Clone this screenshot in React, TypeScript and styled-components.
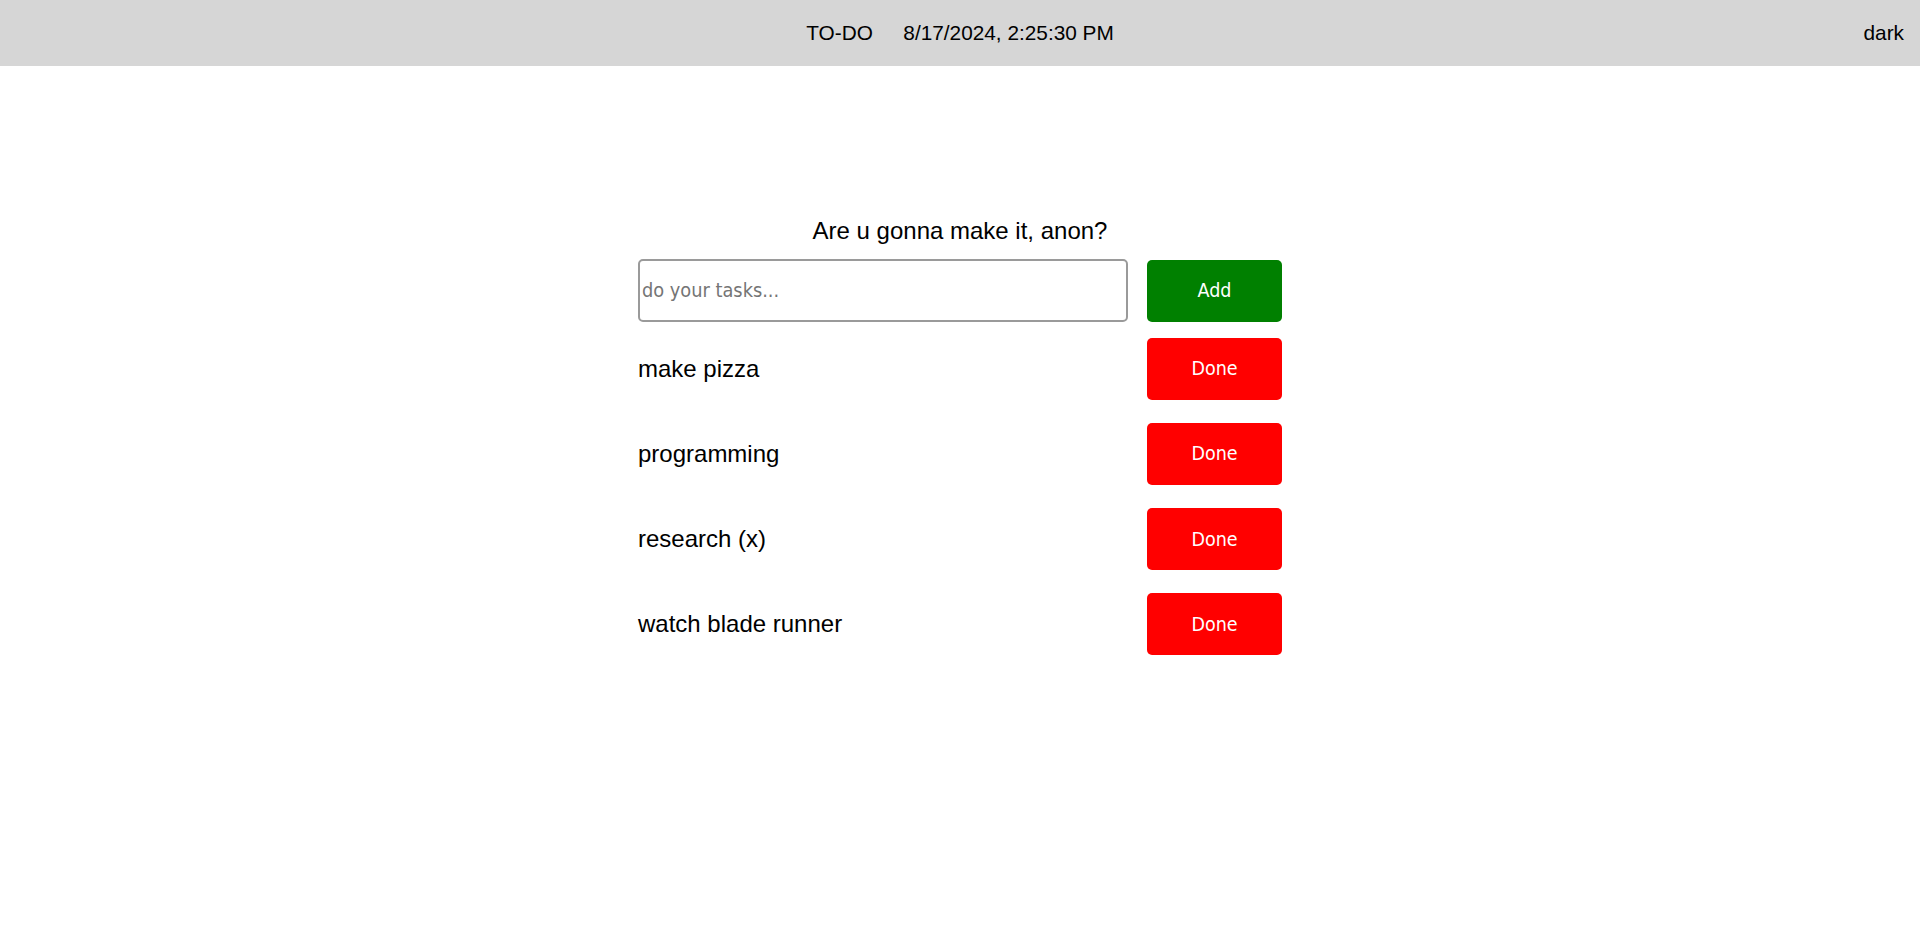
import React, { useState } from "react";
import styled, { createGlobalStyle } from "styled-components";

const GlobalStyle = createGlobalStyle`
  html, body {
    margin: 0;
    padding: 0;
    background: #ffffff;
    font-family: "Liberation Sans", Arial, sans-serif;
    color: #000000;
  }
  * { box-sizing: border-box; }
`;

const Header = styled.header`
  height: 66px;
  background: #d6d6d6;
  display: grid;
  grid-template-columns: 1fr auto 1fr;
  align-items: center;
  padding: 0 16px;
  font-size: 20.8px;
`;

const Brand = styled.div`
  grid-column: 2;
  display: flex;
  align-items: center;
  gap: 30.5px;
`;

const ThemeToggle = styled.button`
  grid-column: 3;
  justify-self: end;
  background: transparent;
  border: none;
  padding: 0;
  font-family: "Liberation Sans", Arial, sans-serif;
  font-size: 20.8px;
  color: #000000;
  cursor: pointer;
`;

const Main = styled.main`
  width: 644px;
  margin: 0 auto;
  padding-top: 150.5px;
  display: flex;
  flex-direction: column;
`;

const Title = styled.h1`
  margin: 0 0 15.5px;
  font-size: 24px;
  font-weight: 400;
  text-align: center;
  line-height: 27px;
`;

const InputRow = styled.form`
  display: flex;
  align-items: center;
  justify-content: space-between;
  margin-bottom: 15.5px;
`;

const TaskInput = styled.input`
  width: 490px;
  height: 63px;
  border: 2px solid #9a9a9a;
  border-radius: 5px;
  padding: 1px 2px;
  font-family: "DejaVu Sans Condensed", "DejaVu Sans", sans-serif;
  font-stretch: condensed;
  font-size: 19.8px;
  outline: none;
  &::placeholder {
    color: #757575;
  }
`;

const ActionButton = styled.button<{ $tone: "add" | "done" }>`
  width: 135px;
  height: 62px;
  border: none;
  border-radius: 5px;
  background: ${(p) => (p.$tone === "add" ? "#008000" : "#ff0000")};
  color: #ffffff;
  font-family: "DejaVu Sans Condensed", "DejaVu Sans", sans-serif;
  font-stretch: condensed;
  font-size: 19.5px;
  cursor: pointer;
`;

const TaskList = styled.ul`
  list-style: none;
  margin: 0;
  padding: 0;
  display: flex;
  flex-direction: column;
  gap: 23.3px;
`;

const TaskRow = styled.li`
  display: flex;
  align-items: center;
  justify-content: space-between;
  height: 62px;
`;

const TaskText = styled.span`
  font-size: 24px;
`;

export default function App() {
  const [tasks, setTasks] = useState<string[]>([
    "make pizza",
    "programming",
    "research (x)",
    "watch blade runner",
  ]);
  const [value, setValue] = useState("");

  return (
    <>
      <GlobalStyle />
      <Header>
        <Brand>
          <span>TO-DO</span>
          <span>8/17/2024, 2:25:30 PM</span>
        </Brand>
        <ThemeToggle type="button">dark</ThemeToggle>
      </Header>
      <Main>
        <Title>Are u gonna make it, anon?</Title>
        <InputRow
          onSubmit={(e) => {
            e.preventDefault();
            if (value.trim()) {
              setTasks([...tasks, value.trim()]);
              setValue("");
            }
          }}
        >
          <TaskInput
            placeholder="do your tasks..."
            value={value}
            onChange={(e) => setValue(e.target.value)}
          />
          <ActionButton $tone="add" type="submit">
            Add
          </ActionButton>
        </InputRow>
        <TaskList>
          {tasks.map((t, i) => (
            <TaskRow key={t + i}>
              <TaskText>{t}</TaskText>
              <ActionButton
                $tone="done"
                type="button"
                onClick={() => setTasks(tasks.filter((_, j) => j !== i))}
              >
                Done
              </ActionButton>
            </TaskRow>
          ))}
        </TaskList>
      </Main>
    </>
  );
}
